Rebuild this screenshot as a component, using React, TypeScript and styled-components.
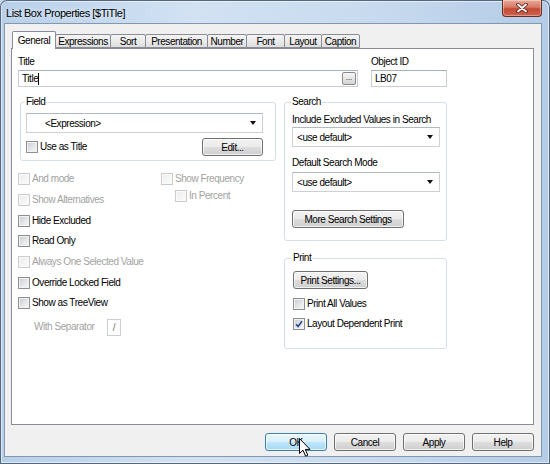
import React from 'react';
import styled, { createGlobalStyle } from 'styled-components';

const GlobalStyle = createGlobalStyle`
  html, body {
    margin: 0;
    padding: 0;
    width: 550px;
    height: 464px;
    overflow: hidden;
    background: #c4d8ee;
  }
  * {
    box-sizing: border-box;
  }
  body {
    font-family: "Liberation Sans", Arial, sans-serif;
    font-size: 10px;
    letter-spacing: -0.45px;
    color: #000;
  }
`;

const Window = styled.div`
  position: relative;
  width: 550px;
  height: 464px;
  display: flex;
  flex-direction: column;
  border-radius: 7px 7px 0 0;
  background: linear-gradient(to right, #b6cfe9 0%, #d2e2f3 35%, #c9dbef 65%, #b4cce7 100%);
  box-shadow: inset 0 0 0 1px #55677c, inset 0 0 0 2px rgba(255, 255, 255, 0.55);
`;

const TitleBar = styled.div`
  height: 23px;
  display: flex;
  align-items: flex-start;
  padding-left: 6px;
`;

const TitleText = styled.div`
  padding-top: 6px;
  line-height: 14px;
  font-size: 11px;
  color: #000;
  text-shadow: 0 0 6px rgba(255, 255, 255, 0.95);
`;

const CloseButton = styled.div`
  margin-left: auto;
  margin-right: 8px;
  width: 40px;
  height: 17px;
  display: flex;
  align-items: center;
  justify-content: center;
  border: 1px solid #6b2b22;
  border-top: none;
  border-radius: 0 0 4px 4px;
  background: linear-gradient(to bottom, #e8aa9a 0%, #d77966 45%, #c24a35 55%, #d0624c 100%);
  box-shadow: inset 0 0 0 1px rgba(255, 255, 255, 0.35);
`;

const Client = styled.div`
  flex: 1;
  margin: 0 8px 7px 4px;
  display: flex;
  flex-direction: column;
  padding: 0 7px 5px 6px;
  background: #f0f0f0;
  border: 1px solid #8497ad;
`;

const TabStrip = styled.div`
  height: 24px;
  display: flex;
  align-items: flex-end;
  padding-left: 1px;
  position: relative;
  z-index: 2;
`;

const Tab = styled.div<{ $active?: boolean; $w: number }>`
  width: ${p => p.$w}px;
  height: ${p => (p.$active ? 18 : 14)}px;
  margin-bottom: ${p => (p.$active ? -1 : 0)}px;
  margin-right: -1px;
  display: flex;
  align-items: center;
  justify-content: center;
  padding-top: ${p => (p.$active ? 0 : 1)}px;
  border: 1px solid #898c95;
  border-bottom: ${p => (p.$active ? 'none' : '1px solid #898c95')};
  border-radius: 2px 2px 0 0;
  background: ${p =>
    p.$active ? '#ffffff' : 'linear-gradient(to bottom, #f4f4f4 0%, #ebebeb 50%, #dddddd 100%)'};
  position: relative;
  z-index: ${p => (p.$active ? 2 : 1)};
`;

const Panel = styled.div`
  height: 377px;
  border: 1px solid #898c95;
  background: #ffffff;
  padding: 7px 0 0 6px;
  position: relative;
  z-index: 1;
`;

const TopRow = styled.div`
  display: flex;
  gap: 13px;
`;

const LabeledField = styled.div<{ $w: number }>`
  width: ${p => p.$w}px;
  display: flex;
  flex-direction: column;
  gap: 2px;
`;

const Label = styled.div<{ $disabled?: boolean }>`
  line-height: 12px;
  white-space: nowrap;
  color: ${p => (p.$disabled ? '#a2a2a2' : '#000')};
`;

const TextBox = styled.div`
  height: 17px;
  display: flex;
  align-items: center;
  padding: 0 1px 0 3px;
  background: #fff;
  border: 1px solid #c9ced4;
  border-top-color: #a9afb7;
`;

const Caret = styled.span`
  width: 1px;
  height: 12px;
  background: #000;
`;

const EllipsisButton = styled.div`
  margin-left: auto;
  width: 14px;
  height: 13px;
  display: flex;
  align-items: flex-end;
  justify-content: center;
  padding-bottom: 2px;
  font-size: 8px;
  line-height: 8px;
  letter-spacing: 0;
  border: 1px solid #8a8a8a;
  border-radius: 2px;
  background: linear-gradient(to bottom, #f6f6f6 0%, #e6e6e6 50%, #d4d4d4 100%);
`;

const Body = styled.div`
  display: flex;
  gap: 8px;
  margin-top: 9px;
`;

const Column = styled.div<{ $w: number }>`
  width: ${p => p.$w}px;
  display: flex;
  flex-direction: column;
`;

const Group = styled.fieldset<{ $pad: string; $indent?: number; $top?: number }>`
  margin: ${p => p.$top ?? 0}px 0 0 ${p => p.$indent ?? 0}px;
  min-width: 0;
  padding: ${p => p.$pad};
  border: 1px solid #d5dfe5;
  border-radius: 3px;
`;

const Legend = styled.legend`
  padding: 0 1px;
  margin-left: -1px;
  line-height: 12px;
`;

const Select = styled.div<{ $textIndent: number; $top: number }>`
  height: 20px;
  display: flex;
  align-items: center;
  margin-top: ${p => p.$top}px;
  padding: 0 6px 0 ${p => p.$textIndent}px;
  background: #fff;
  border: 1px solid #cdd1d6;
  border-top-color: #b3b9c0;
`;

const Arrow = styled.span`
  margin-left: auto;
  width: 0;
  height: 0;
  border-left: 3.5px solid transparent;
  border-right: 3.5px solid transparent;
  border-top: 4px solid #111;
`;

const Button = styled.div<{ $w: number; $hot?: boolean; $top?: number }>`
  position: relative;
  width: ${p => p.$w}px;
  height: 18px;
  margin-top: ${p => p.$top ?? 0}px;
  display: flex;
  align-items: center;
  justify-content: center;
  border: 1px solid ${p => (p.$hot ? '#3c7fb1' : '#707070')};
  border-radius: 3px;
  background: ${p =>
    p.$hot
      ? 'linear-gradient(to bottom, #eaf6fd 0%, #d9f0fc 50%, #bee6fd 51%, #a7d9f5 100%)'
      : 'linear-gradient(to bottom, #f2f2f2 0%, #ebebeb 50%, #dddddd 51%, #cfcfcf 100%)'};
  box-shadow: inset 0 0 0 1px rgba(255, 255, 255, 0.7);
`;

const ButtonRow = styled.div<{ $top: number }>`
  display: flex;
  justify-content: space-between;
  align-items: center;
  margin-top: ${p => p.$top}px;
`;

const GroupLabel = styled(Label)<{ $top: number }>`
  margin-top: ${p => p.$top}px;
`;

const CheckRow = styled.div<{ $h: number; $indent?: number; $top?: number }>`
  height: ${p => p.$h}px;
  display: flex;
  align-items: center;
  gap: 2px;
  padding-left: ${p => p.$indent ?? 0}px;
  margin-top: ${p => p.$top ?? 0}px;
`;

const Box = styled.span<{ $disabled?: boolean }>`
  width: 12px;
  height: 12px;
  flex: none;
  display: flex;
  align-items: center;
  justify-content: center;
  border: 1px solid ${p => (p.$disabled ? '#cbcbcb' : '#8e8f8f')};
  background: ${p =>
    p.$disabled
      ? 'linear-gradient(135deg, #ececec, #fbfbfb)'
      : 'linear-gradient(135deg, #c6cacf 0%, #e4e6e8 55%, #f7f7f7 100%)'};
  box-shadow: inset 0 0 0 1px ${p => (p.$disabled ? '#fafafa' : '#f2f2f2')};
`;

const CheckGrid = styled.div`
  display: flex;
  margin-top: 8px;
`;

const CheckColumn = styled.div<{ $w?: number }>`
  width: ${p => (p.$w ? `${p.$w}px` : 'auto')};
  display: flex;
  flex-direction: column;
`;

const SeparatorRow = styled.div`
  display: flex;
  align-items: center;
  margin-top: 5px;
  padding-left: 16px;
`;

const SeparatorLabel = styled(Label)`
  width: 73px;
`;

const SeparatorBox = styled.div`
  width: 14px;
  height: 17px;
  display: flex;
  align-items: center;
  justify-content: center;
  border: 1px solid #c9ced4;
  color: #777;
`;

const Footer = styled.div`
  display: flex;
  justify-content: flex-end;
  gap: 7px;
  margin-top: 8px;
`;

const Cursor = styled.svg`
  position: absolute;
  left: 33px;
  top: 4px;
  overflow: visible;
`;

type CheckProps = {
  label: string;
  disabled?: boolean;
  checked?: boolean;
  h?: number;
  indent?: number;
  top?: number;
};

const Check = ({ label, disabled, checked, h = 20.7, indent, top }: CheckProps) => (
  <CheckRow $h={h} $indent={indent} $top={top}>
    <Box $disabled={disabled}>
      {checked && (
        <svg width="8" height="8" viewBox="0 0 8 8">
          <path d="M1 4.2 L3.1 6.4 L7 1.2" fill="none" stroke="#2a4693" strokeWidth="1.6" />
        </svg>
      )}
    </Box>
    <Label $disabled={disabled}>{label}</Label>
  </CheckRow>
);

const tabs = [
  { name: 'General', w: 44 },
  { name: 'Expressions', w: 56 },
  { name: 'Sort', w: 36 },
  { name: 'Presentation', w: 63 },
  { name: 'Number', w: 40 },
  { name: 'Font', w: 39 },
  { name: 'Layout', w: 38 },
  { name: 'Caption', w: 39 },
];

const App = () => (
  <Window>
    <GlobalStyle />
    <TitleBar>
      <TitleText>List Box Properties [$TiTle]</TitleText>
      <CloseButton>
        <svg width="12" height="10" viewBox="0 0 12 10">
          <path d="M2 1.5 L10 8.5 M10 1.5 L2 8.5" stroke="#5a2119" strokeWidth="3.6" strokeLinecap="round" />
          <path d="M2 1.5 L10 8.5 M10 1.5 L2 8.5" stroke="#ffffff" strokeWidth="1.8" strokeLinecap="round" />
        </svg>
      </CloseButton>
    </TitleBar>

    <Client>
      <TabStrip>
        {tabs.map((t, i) => (
          <Tab key={t.name} $w={t.w} $active={i === 0}>
            {t.name}
          </Tab>
        ))}
      </TabStrip>

      <Panel>
        <TopRow>
          <LabeledField $w={340}>
            <Label>Title</Label>
            <TextBox>
              Title
              <Caret />
              <EllipsisButton>...</EllipsisButton>
            </TextBox>
          </LabeledField>
          <LabeledField $w={76}>
            <Label>Object ID</Label>
            <TextBox>LB07</TextBox>
          </LabeledField>
        </TopRow>

        <Body>
          <Column $w={258}>
            <Group $pad="0 12px 4px 5px" $indent={2}>
              <Legend>Field</Legend>
              <Select $textIndent={18} $top={5}>
                &lt;Expression&gt;
                <Arrow />
              </Select>
              <ButtonRow $top={5}>
                <Check label="Use as Title" h={18} />
                <Button $w={61}>Edit...</Button>
              </ButtonRow>
            </Group>

            <CheckGrid>
              <CheckColumn $w={143}>
                <Check label="And mode" disabled />
                <Check label="Show Alternatives" disabled />
                <Check label="Hide Excluded" />
                <Check label="Read Only" />
                <Check label="Always One Selected Value" disabled />
                <Check label="Override Locked Field" />
                <Check label="Show as TreeView" />
              </CheckColumn>
              <CheckColumn>
                <Check label="Show Frequency" disabled />
                <Check label="In Percent" disabled h={13} indent={14} />
              </CheckColumn>
            </CheckGrid>

            <SeparatorRow>
              <SeparatorLabel $disabled>With Separator</SeparatorLabel>
              <SeparatorBox>/</SeparatorBox>
            </SeparatorRow>
          </Column>

          <Column $w={163}>
            <Group $pad="0 6px 12px 7px">
              <Legend>Search</Legend>
              <GroupLabel $top={6}>Include Excluded Values in Search</GroupLabel>
              <Select $textIndent={4} $top={1}>
                &lt;use default&gt;
                <Arrow />
              </Select>
              <GroupLabel $top={10}>Default Search Mode</GroupLabel>
              <Select $textIndent={4} $top={3}>
                &lt;use default&gt;
                <Arrow />
              </Select>
              <Button $w={112} $top={18}>
                More Search Settings
              </Button>
            </Group>

            <Group $pad="0 6px 14px 8px" $top={11}>
              <Legend>Print</Legend>
              <Button $w={75} $top={7}>
                Print Settings...
              </Button>
              <Check label="Print All Values" h={20} top={5} />
              <Check label="Layout Dependent Print" h={20} checked />
            </Group>
          </Column>
        </Body>
      </Panel>

      <Footer>
        <Button $w={62} $hot>
          OK
          <Cursor width="12" height="19" viewBox="0 0 12 19">
            <path
              d="M0.5 0.5 L0.5 15.5 L4 12.2 L6.6 18.2 L8.8 17.2 L6.3 11.4 L11 11.4 Z"
              fill="#ffffff"
              stroke="#000000"
              strokeWidth="1"
              strokeLinejoin="miter"
            />
          </Cursor>
        </Button>
        <Button $w={62}>Cancel</Button>
        <Button $w={62}>Apply</Button>
        <Button $w={62}>Help</Button>
      </Footer>
    </Client>
  </Window>
);

export default App;
